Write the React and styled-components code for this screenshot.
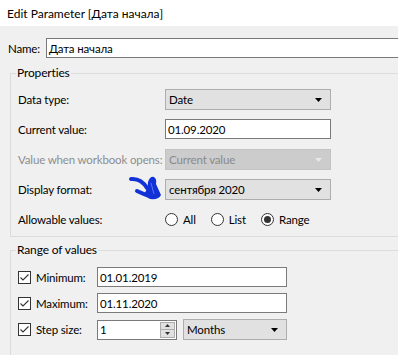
import React from 'react';
import styled, { createGlobalStyle } from 'styled-components';

const GlobalStyle = createGlobalStyle`
  html, body {
    margin: 0;
    padding: 0;
    background: #f0f0f0;
    overflow: hidden;
  }
  body {
    font-family: Lato, "Noto Sans", "Liberation Sans", sans-serif;
    font-size: 11.5px;
    letter-spacing: -0.15px;
    color: #000;
    white-space: nowrap;
  }
`;

const Window = styled.div`
  position: relative;
  width: 398px;
  height: 355px;
  overflow: hidden;
  background: #f0f0f0;
`;

const TitleBar = styled.div`
  height: 26px;
  background: #fff;
  padding-left: 7px;
  display: flex;
  align-items: center;
  font-size: 12px;
  letter-spacing: 0;
`;

const NameRow = styled.div`
  display: flex;
  align-items: center;
  margin: 12px -30px 0 8px;
  height: 20px;
`;

const NameLabel = styled.span`
  width: 38px;
`;

const TextBox = styled.div`
  box-sizing: border-box;
  height: 20px;
  width: ${p => (p.$w ? `${p.$w}px` : 'auto')};
  flex: ${p => (p.$w ? 'none' : '1')};
  border: 1px solid #7a7a7a;
  background: #fff;
  padding-left: 2px;
  display: flex;
  align-items: center;
  position: relative;
`;

const Group = styled.fieldset`
  margin: ${p => p.$top}px -30px 0 10px;
  padding: ${p => p.$pt}px 0 ${p => p.$pb}px 7px;
  border: 1px solid #dcdcdc;
  min-width: 0;
`;

const Legend = styled.legend`
  padding: 0 1px;
  margin-left: -2px;
  line-height: 16px;
  font-size: 12px;
`;

const Rows = styled.div`
  display: flex;
  flex-direction: column;
  gap: ${p => p.$gap}px;
`;

const PropRow = styled.div`
  display: grid;
  grid-template-columns: 147px 166px;
  align-items: center;
  height: 20px;
`;

const Label = styled.span`
  color: ${p => (p.$disabled ? '#8d8d8d' : '#000')};
`;

const Select = styled.div`
  box-sizing: border-box;
  height: 21px;
  width: ${p => (p.$w ? `${p.$w}px` : '100%')};
  border: 1px solid ${p => (p.$disabled ? '#c4c4c4' : '#adadad')};
  background: ${p => (p.$disabled ? '#cccccc' : '#e1e1e1')};
  color: ${p => (p.$disabled ? '#8a8a8a' : '#000')};
  padding: 0 8px 0 3px;
  display: flex;
  align-items: center;
  justify-content: space-between;
`;

const Caret = ({ color = '#000' }) => (
  <svg width="7" height="4" viewBox="0 0 7 4">
    <path d="M0 0 H7 L3.5 4 Z" fill={color} />
  </svg>
);

const Radios = styled.div`
  display: flex;
  align-items: center;
  gap: 15px;
`;

const RadioItem = styled.label`
  display: flex;
  align-items: center;
  gap: 5px;
`;

const RadioCircle = styled.span`
  box-sizing: border-box;
  width: 13px;
  height: 13px;
  border-radius: 50%;
  border: 1px solid #333;
  background: #fff;
  display: flex;
  align-items: center;
  justify-content: center;
  &::after {
    content: '';
    width: 7px;
    height: 7px;
    border-radius: 50%;
    background: ${p => (p.$on ? '#333' : 'transparent')};
  }
`;

const RangeRow = styled.div`
  display: grid;
  grid-template-columns: 79px auto;
  align-items: center;
  height: 20px;
`;

const CheckItem = styled.label`
  display: flex;
  align-items: center;
  gap: 5px;
`;

const CheckBox = styled.span`
  box-sizing: border-box;
  width: 13px;
  height: 13px;
  border: 1px solid #333;
  background: #fff;
  display: flex;
  align-items: center;
  justify-content: center;
`;

const StepControls = styled.div`
  display: flex;
  align-items: center;
  gap: 6px;
`;

const Spinner = styled.div`
  position: absolute;
  right: 1px;
  top: 1px;
  bottom: 1px;
  width: 15px;
  display: flex;
  flex-direction: column;
`;

const SpinButton = styled.div`
  flex: 1;
  box-sizing: border-box;
  border: 1px solid #adadad;
  background: #e1e1e1;
  display: flex;
  align-items: center;
  justify-content: center;
  & + & {
    border-top: none;
  }
`;

const Arrow = styled.svg`
  position: absolute;
  left: 126px;
  top: 174px;
`;

const Check = () => (
  <CheckBox>
    <svg width="11" height="11" viewBox="0 0 11 11">
      <path d="M1.5 5.5 L4 8 L9.5 2.5" stroke="#333" strokeWidth="1.1" fill="none" />
    </svg>
  </CheckBox>
);

export default function App() {
  return (
    <Window>
      <GlobalStyle />
      <TitleBar>Edit Parameter [Дата начала]</TitleBar>

      <NameRow>
        <NameLabel>Name:</NameLabel>
        <TextBox>Дата начала</TextBox>
      </NameRow>

      <Group $top={7} $pt={8} $pb={7}>
        <Legend>Properties</Legend>
        <Rows $gap={10}>
          <PropRow>
            <Label>Data type:</Label>
            <Select>
              Date
              <Caret />
            </Select>
          </PropRow>
          <PropRow>
            <Label>Current value:</Label>
            <TextBox>01.09.2020</TextBox>
          </PropRow>
          <PropRow>
            <Label $disabled>Value when workbook opens:</Label>
            <Select $disabled>
              Current value
              <Caret color="#e8e8e8" />
            </Select>
          </PropRow>
          <PropRow>
            <Label>Display format:</Label>
            <Select>
              сентября 2020
              <Caret />
            </Select>
          </PropRow>
          <PropRow>
            <Label>Allowable values:</Label>
            <Radios>
              <RadioItem>
                <RadioCircle />
                All
              </RadioItem>
              <RadioItem>
                <RadioCircle />
                List
              </RadioItem>
              <RadioItem>
                <RadioCircle $on />
                Range
              </RadioItem>
            </Radios>
          </PropRow>
        </Rows>
      </Group>

      <Group $top={5} $pt={9} $pb={30}>
        <Legend>Range of values</Legend>
        <Rows $gap={6}>
          <RangeRow>
            <CheckItem>
              <Check />
              Minimum:
            </CheckItem>
            <TextBox $w={190}>01.01.2019</TextBox>
          </RangeRow>
          <RangeRow>
            <CheckItem>
              <Check />
              Maximum:
            </CheckItem>
            <TextBox $w={190}>01.11.2020</TextBox>
          </RangeRow>
          <RangeRow>
            <CheckItem>
              <Check />
              Step size:
            </CheckItem>
            <StepControls>
              <TextBox $w={80}>
                1
                <Spinner>
                  <SpinButton>
                    <svg width="5" height="3" viewBox="0 0 5 3">
                      <path d="M0 3 H5 L2.5 0 Z" fill="#333" />
                    </svg>
                  </SpinButton>
                  <SpinButton>
                    <svg width="5" height="3" viewBox="0 0 5 3">
                      <path d="M0 0 H5 L2.5 3 Z" fill="#333" />
                    </svg>
                  </SpinButton>
                </Spinner>
              </TextBox>
              <Select $w={104}>
                Months
                <Caret />
              </Select>
            </StepControls>
          </RangeRow>
        </Rows>
      </Group>

      <Arrow width="40" height="30" viewBox="126 174 40 30">
        <path d="M131 179 Q141 178 147 188" stroke="#1232d8" strokeWidth="4" fill="none" strokeLinecap="round" />
        <path d="M137 191 Q143 194 150 196" stroke="#1232d8" strokeWidth="4" fill="none" strokeLinecap="round" />
        <path d="M148 182 Q150 176 154 177 Q157 179 156 184 L161 195 Q159 200 150 199 L143 195 Q148 190 148 182 Z" fill="#1232d8" />
        <path d="M151 183 L154 194" stroke="#5e72ee" strokeWidth="1" />
      </Arrow>
    </Window>
  );
}
